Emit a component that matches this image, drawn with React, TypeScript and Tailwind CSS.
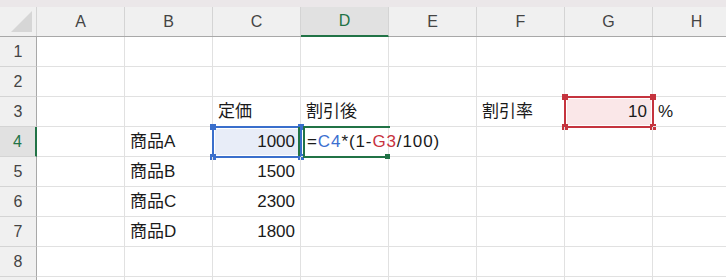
import React from "react";

const cols = ["A", "B", "C", "D", "E", "F", "G", "H"];
const rows = [1, 2, 3, 4, 5, 6, 7, 8, 9];

type Cell = { text: string; right?: boolean };

const data: Record<string, Cell> = {
  C3: { text: "定価" },
  D3: { text: "割引後" },
  F3: { text: "割引率" },
  G3: { text: "10", right: true },
  H3: { text: "%" },
  B4: { text: "商品A" },
  C4: { text: "1000", right: true },
  B5: { text: "商品B" },
  C5: { text: "1500", right: true },
  B6: { text: "商品C" },
  C6: { text: "2300", right: true },
  B7: { text: "商品D" },
  C7: { text: "1800", right: true },
};

const cellBg: Record<string, string> = {
  C4: "bg-[#e8edf8]",
  G3: "bg-[#fae7e8]",
};

// coloured box drawn round a cell that the formula refers to
function RefBox({ color }: { color: "blue" | "red" }) {
  const border = color === "blue" ? "border-[#3a6fcc]" : "border-[#c5343e]";
  const fill = color === "blue" ? "bg-[#3a6fcc]" : "bg-[#c5343e]";
  return (
    <div className={`absolute -left-[1px] -top-[1px] -right-[2px] -bottom-[2px] border-2 ${border} shadow-[inset_0_0_0_1px_white] pointer-events-none`}>
      <div className={`absolute -left-[4px] -top-[4px] w-[6px] h-[6px] ${fill}`} />
      <div className={`absolute -right-[4px] -top-[4px] w-[6px] h-[6px] ${fill}`} />
      <div className={`absolute -left-[4px] -bottom-[4px] w-[6px] h-[6px] ${fill}`} />
      <div className={`absolute -right-[4px] -bottom-[4px] w-[6px] h-[6px] ${fill}`} />
    </div>
  );
}

// in-cell editor of the active cell
function EditBox() {
  return (
    <div className="absolute -left-[1px] -top-[1px] right-0 -bottom-[2px] pointer-events-none">
      <div className="absolute -left-[2px] top-[1px] bottom-[2px] w-[2px] bg-[#217346]" />
      <div className="absolute left-[3px] -right-[2px] top-0 border-t-2 border-l-2 border-[#217346] h-full" />
      <div className="absolute left-[3px] right-[1px] bottom-0 h-[2px] bg-[#217346]" />
      <div className="absolute -right-[2px] -bottom-[1px] w-[5px] h-[5px] bg-[#217346]" />
    </div>
  );
}

function Formula() {
  return (
    <span className="whitespace-nowrap tracking-[0.9px] text-[#1a1a1a] pl-[3px]">
      =<span className="text-[#3b6fd0]">C4</span>*(1-<span className="text-[#c8323f]">G3</span>/100)
    </span>
  );
}

export default function App() {
  return (
    <div
      className="relative w-[726px] h-[280px] overflow-hidden bg-white text-[17px] text-[#1a1a1a]"
      style={{ fontFamily: '"Liberation Sans", "Noto Sans CJK JP", sans-serif' }}
    >
      <div className="h-[7px] bg-[#ebe7e9]" />

      {/* column headers */}
      <div className="flex h-[30px] bg-[#f0f0f0] border-b border-[#a8a8a8] text-[16px] text-[#444]">
        <div className="w-[37px] shrink-0 border-r border-[#d4d4d4] flex items-end justify-end p-[3px]">
          <svg width="22" height="22" viewBox="0 0 22 22">
            <polygon points="21,0 21,21 0,21" fill="#d6d6d6" />
          </svg>
        </div>
        {cols.map((c) =>
          c === "D" ? (
            <div
              key={c}
              className="w-[88px] shrink-0 border-r border-[#d4d4d4] bg-[#e1e1e1] border-b-[2px] border-b-[#217346] -mb-[1px] flex items-center justify-center text-[#217346]"
            >
              {c}
            </div>
          ) : (
            <div key={c} className="w-[88px] shrink-0 border-r border-[#d4d4d4] flex items-center justify-center">
              {c}
            </div>
          )
        )}
      </div>

      {rows.map((r) => (
        <div key={r} className="flex h-[30px]">
          <div
            className={`w-[37px] shrink-0 border-b border-[#d4d4d4] flex items-center justify-center text-[16px] ${
              r === 4
                ? "bg-[#e1e1e1] text-[#217346] border-r-[2px] border-r-[#217346]"
                : "bg-[#f0f0f0] text-[#444] border-r border-r-[#a8a8a8]"
            }`}
          >
            {r < 9 ? r : ""}
          </div>
          {cols.map((c) => {
            const key = `${c}${r}`;
            const cell = data[key];
            return (
              <div
                key={key}
                className={`relative w-[88px] shrink-0 border-r border-b border-[#e1e1e1] flex items-center px-[5px] pt-[1px] ${
                  cellBg[key] ?? ""
                } ${cell?.right ? "justify-end" : "justify-start"} ${key === "D4" ? "z-10 pl-[3px]" : ""}`}
              >
                {key === "D4" ? <Formula /> : cell?.text}
                {key === "C4" && <RefBox color="blue" />}
                {key === "G3" && <RefBox color="red" />}
                {key === "D4" && <EditBox />}
              </div>
            );
          })}
        </div>
      ))}
    </div>
  );
}
